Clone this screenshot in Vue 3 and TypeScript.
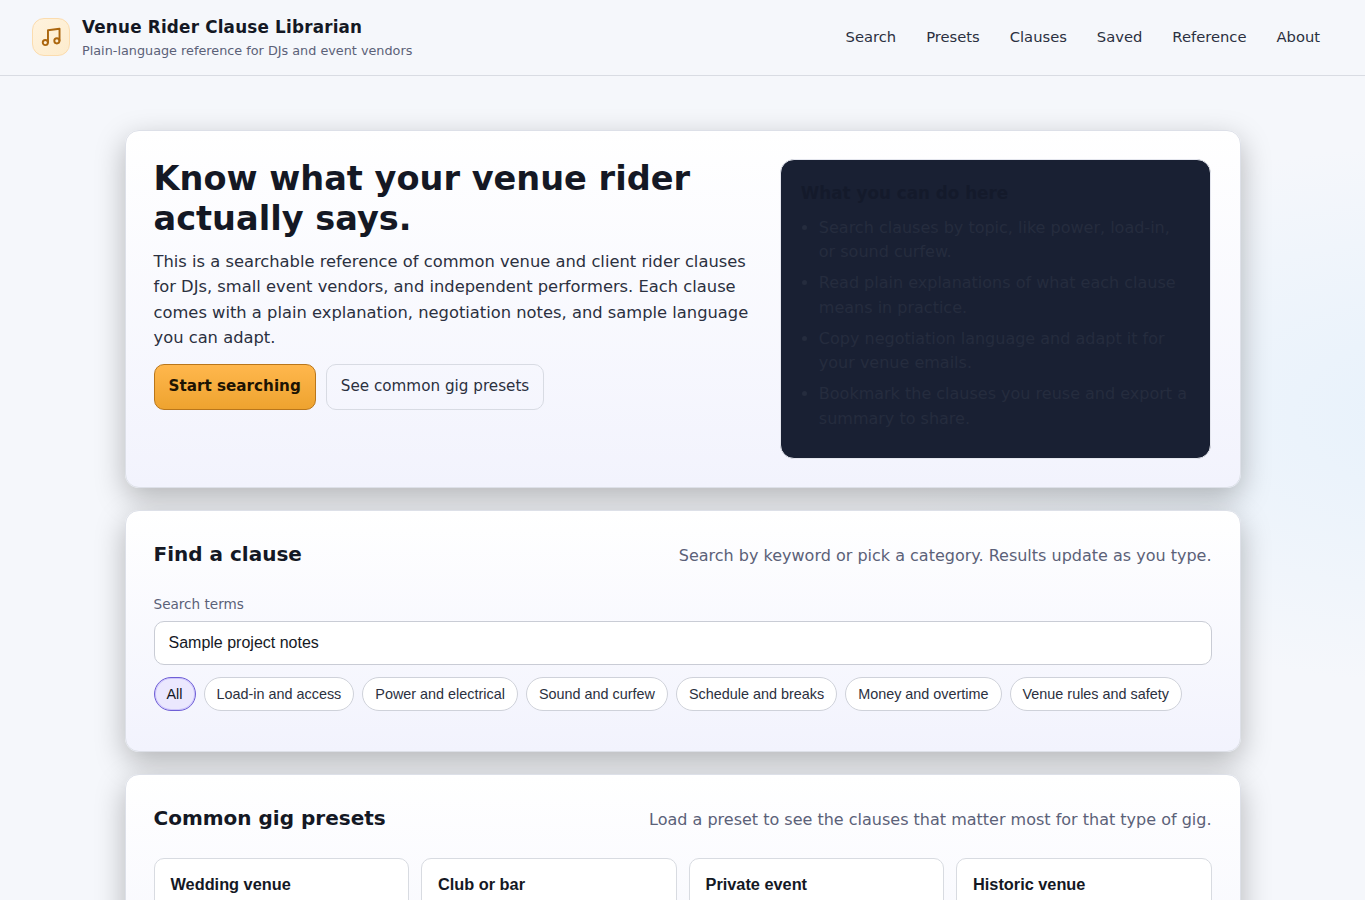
<script setup lang="ts">
import { ref } from 'vue'

const navLinks: string[] = ['Search', 'Presets', 'Clauses', 'Saved', 'Reference', 'About']
const features: string[] = [
  'Search clauses by topic, like power, load-in, or sound curfew.',
  'Read plain explanations of what each clause means in practice.',
  'Copy negotiation language and adapt it for your venue emails.',
  'Bookmark the clauses you reuse and export a summary to share.',
]
const categories: string[] = [
  'All',
  'Load-in and access',
  'Power and electrical',
  'Sound and curfew',
  'Schedule and breaks',
  'Money and overtime',
  'Venue rules and safety',
]
const presets: string[] = ['Wedding venue', 'Club or bar', 'Private event', 'Historic venue']

const query = ref('Sample project notes')
const active = ref('All')
</script>

<template>
  <div class="page">
    <header class="topbar">
      <div class="brand">
        <span class="mark">
          <svg viewBox="0 0 24 24" width="22" height="22" fill="none" stroke="currentColor" stroke-width="2.1" stroke-linecap="round" stroke-linejoin="round">
            <path d="M8.7 18V4.7L21.3 3v13" />
            <circle cx="5.8" cy="18.1" r="2.8" />
            <circle cx="18.4" cy="16.2" r="2.8" />
          </svg>
        </span>
        <div>
          <div class="brand-name">Venue Rider Clause Librarian</div>
          <div class="brand-sub">Plain-language reference for DJs and event vendors</div>
        </div>
      </div>
      <nav class="nav">
        <a v-for="link in navLinks" :key="link">{{ link }}</a>
      </nav>
    </header>

    <main class="main">
      <section class="card hero">
        <div>
          <h1>Know what your venue rider actually says.</h1>
          <p class="lead">
            This is a searchable reference of common venue and client rider clauses for DJs, small event vendors, and
            independent performers. Each clause comes with a plain explanation, negotiation notes, and sample language
            you can adapt.
          </p>
          <div class="actions">
            <a class="btn primary">Start searching</a>
            <a class="btn">See common gig presets</a>
          </div>
        </div>
        <aside class="aside">
          <h2>What you can do here</h2>
          <ul>
            <li v-for="item in features" :key="item">{{ item }}</li>
          </ul>
        </aside>
      </section>

      <section class="card search">
        <div class="head">
          <h2>Find a clause</h2>
          <p>Search by keyword or pick a category. Results update as you type.</p>
        </div>
        <label class="label" for="terms">Search terms</label>
        <input id="terms" v-model="query" class="field" type="text" />
        <div class="chips">
          <button
            v-for="c in categories"
            :key="c"
            type="button"
            class="chip"
            :class="{ on: active === c }"
            @click="active = c"
          >{{ c }}</button>
        </div>
      </section>

      <section class="card presets">
        <div class="head">
          <h2>Common gig presets</h2>
          <p>Load a preset to see the clauses that matter most for that type of gig.</p>
        </div>
        <div class="grid">
          <button v-for="p in presets" :key="p" type="button" class="preset">{{ p }}</button>
        </div>
      </section>
    </main>
  </div>
</template>

<style>
body {
  background: #f5f7fb;
}
</style>

<style scoped>
.page {
  box-sizing: border-box;
  height: 900px;
  overflow: hidden;
  font-family: 'DejaVu Sans', sans-serif;
  font-size: 16px;
  line-height: 1.55;
  color: #141824;
  background: radial-gradient(900px 390px at 110% 46%, #e6f1fb, rgba(230, 241, 251, 0) 70%), #f5f7fb;
}
.topbar {
  box-sizing: border-box;
  height: 76px;
  padding: 0 33px 1px 32px;
  display: flex;
  align-items: center;
  justify-content: space-between;
  border-bottom: 1px solid #d9dce3;
}
.brand {
  display: flex;
  align-items: center;
  gap: 12px;
}
.mark {
  box-sizing: border-box;
  width: 38px;
  height: 38px;
  display: grid;
  place-items: center;
  color: #ab660f;
  border: 1px solid #fbdcae;
  border-radius: 12px;
  background: linear-gradient(135deg, #fff3de, #fdeccd);
}
.mark svg {
  display: block;
}
.brand-name {
  font-size: 16.8px;
  font-weight: 700;
  line-height: 26px;
  letter-spacing: 0.2px;
}
.brand-sub {
  font-size: 12.8px;
  line-height: 20px;
  padding-top: 1px;
  margin-bottom: -1px;
  color: #5b6178;
}
.nav {
  display: flex;
  gap: 6px;
}
.nav a {
  padding: 8px 12px;
  font-size: 14.72px;
  line-height: 22px;
  color: #2b3040;
}
.main {
  box-sizing: border-box;
  width: 1116px;
  margin: 0 auto;
  padding-top: 54px;
  display: flex;
  flex-direction: column;
  gap: 22px;
}
.card {
  box-sizing: border-box;
  flex: none;
  padding: 28px;
  border: 1px solid #dde0e8;
  border-radius: 14px;
  background: linear-gradient(180deg, #ffffff, #f2f3fd);
  box-shadow: 0 10px 30px rgba(0, 0, 0, 0.27);
}
.hero {
  height: 358px;
  display: grid;
  grid-template-columns: 1.4fr 1fr;
  gap: 22px;
}
h1 {
  margin: 0 0 9.4px;
  font-size: 33.6px;
  line-height: 40.3px;
}
.lead {
  margin: 0;
  font-size: 16.32px;
  line-height: 25.3px;
  color: #2b3040;
}
.actions {
  display: flex;
  gap: 10px;
  margin-top: 13.4px;
}
.btn {
  box-sizing: border-box;
  height: 46px;
  padding: 0 14px;
  font-size: 15.2px;
  line-height: 43px;
  color: #2b3040;
  border: 1px solid #d8dbe3;
  border-radius: 10px;
}
.btn.primary {
  font-weight: 700;
  color: #1d1403;
  border-color: #b9761b;
  background: linear-gradient(180deg, #ffb74d, #eea32f);
}
.aside {
  box-sizing: border-box;
  padding: 19px 20px;
  border: 1px solid #e4e6ee;
  border-radius: 14px;
  background: #192033;
}
.aside h2 {
  margin: 0 0 8.5px;
  font-size: 16.8px;
  line-height: 28px;
  color: #141a2b;
}
.aside ul {
  margin: 0;
  padding-left: 18px;
  color: #252c3e;
}
.aside li {
  margin-bottom: 6px;
  line-height: 24.8px;
}
.search {
  height: 242px;
}
.presets {
  height: 300px;
}
.head {
  display: flex;
  align-items: baseline;
  justify-content: space-between;
  padding-top: 1px;
}
.head h2 {
  margin: 0;
  font-size: 20px;
  line-height: 28px;
}
.head p {
  margin: 0;
  color: #5b6178;
}
.label {
  display: block;
  margin-top: 24px;
  font-size: 13.6px;
  line-height: 22px;
  color: #5b6178;
}
.field {
  box-sizing: border-box;
  display: block;
  width: 100%;
  height: 44px;
  margin-top: 6px;
  padding: 0 14px;
  font: 16px 'Liberation Sans', Arial, sans-serif;
  color: #141824;
  border: 1px solid #c9ccd5;
  border-radius: 10px;
  background: #fff;
  outline: none;
}
.chips {
  display: flex;
  gap: 8px;
  margin-top: 12px;
}
.chip {
  height: 34px;
  padding: 0 12px;
  font: 14.4px 'Liberation Sans', Arial, sans-serif;
  color: #2b3040;
  border: 1px solid #cfd2da;
  border-radius: 999px;
  background: #fff;
}
.chip.on {
  color: #141824;
  border-color: #6f5fd6;
  background: #ebe8fe;
  box-shadow: inset 0 0 0 1px #cdc5fb;
}
.grid {
  display: grid;
  grid-template-columns: repeat(4, 1fr);
  gap: 12px;
  margin-top: 25px;
}
.preset {
  height: 160px;
  padding: 16px;
  display: flex;
  align-items: flex-start;
  font: 700 16.32px 'Liberation Sans', Arial, sans-serif;
  color: #141824;
  border: 1px solid #d8dbe1;
  border-radius: 10px;
  background: #fff;
}
</style>
